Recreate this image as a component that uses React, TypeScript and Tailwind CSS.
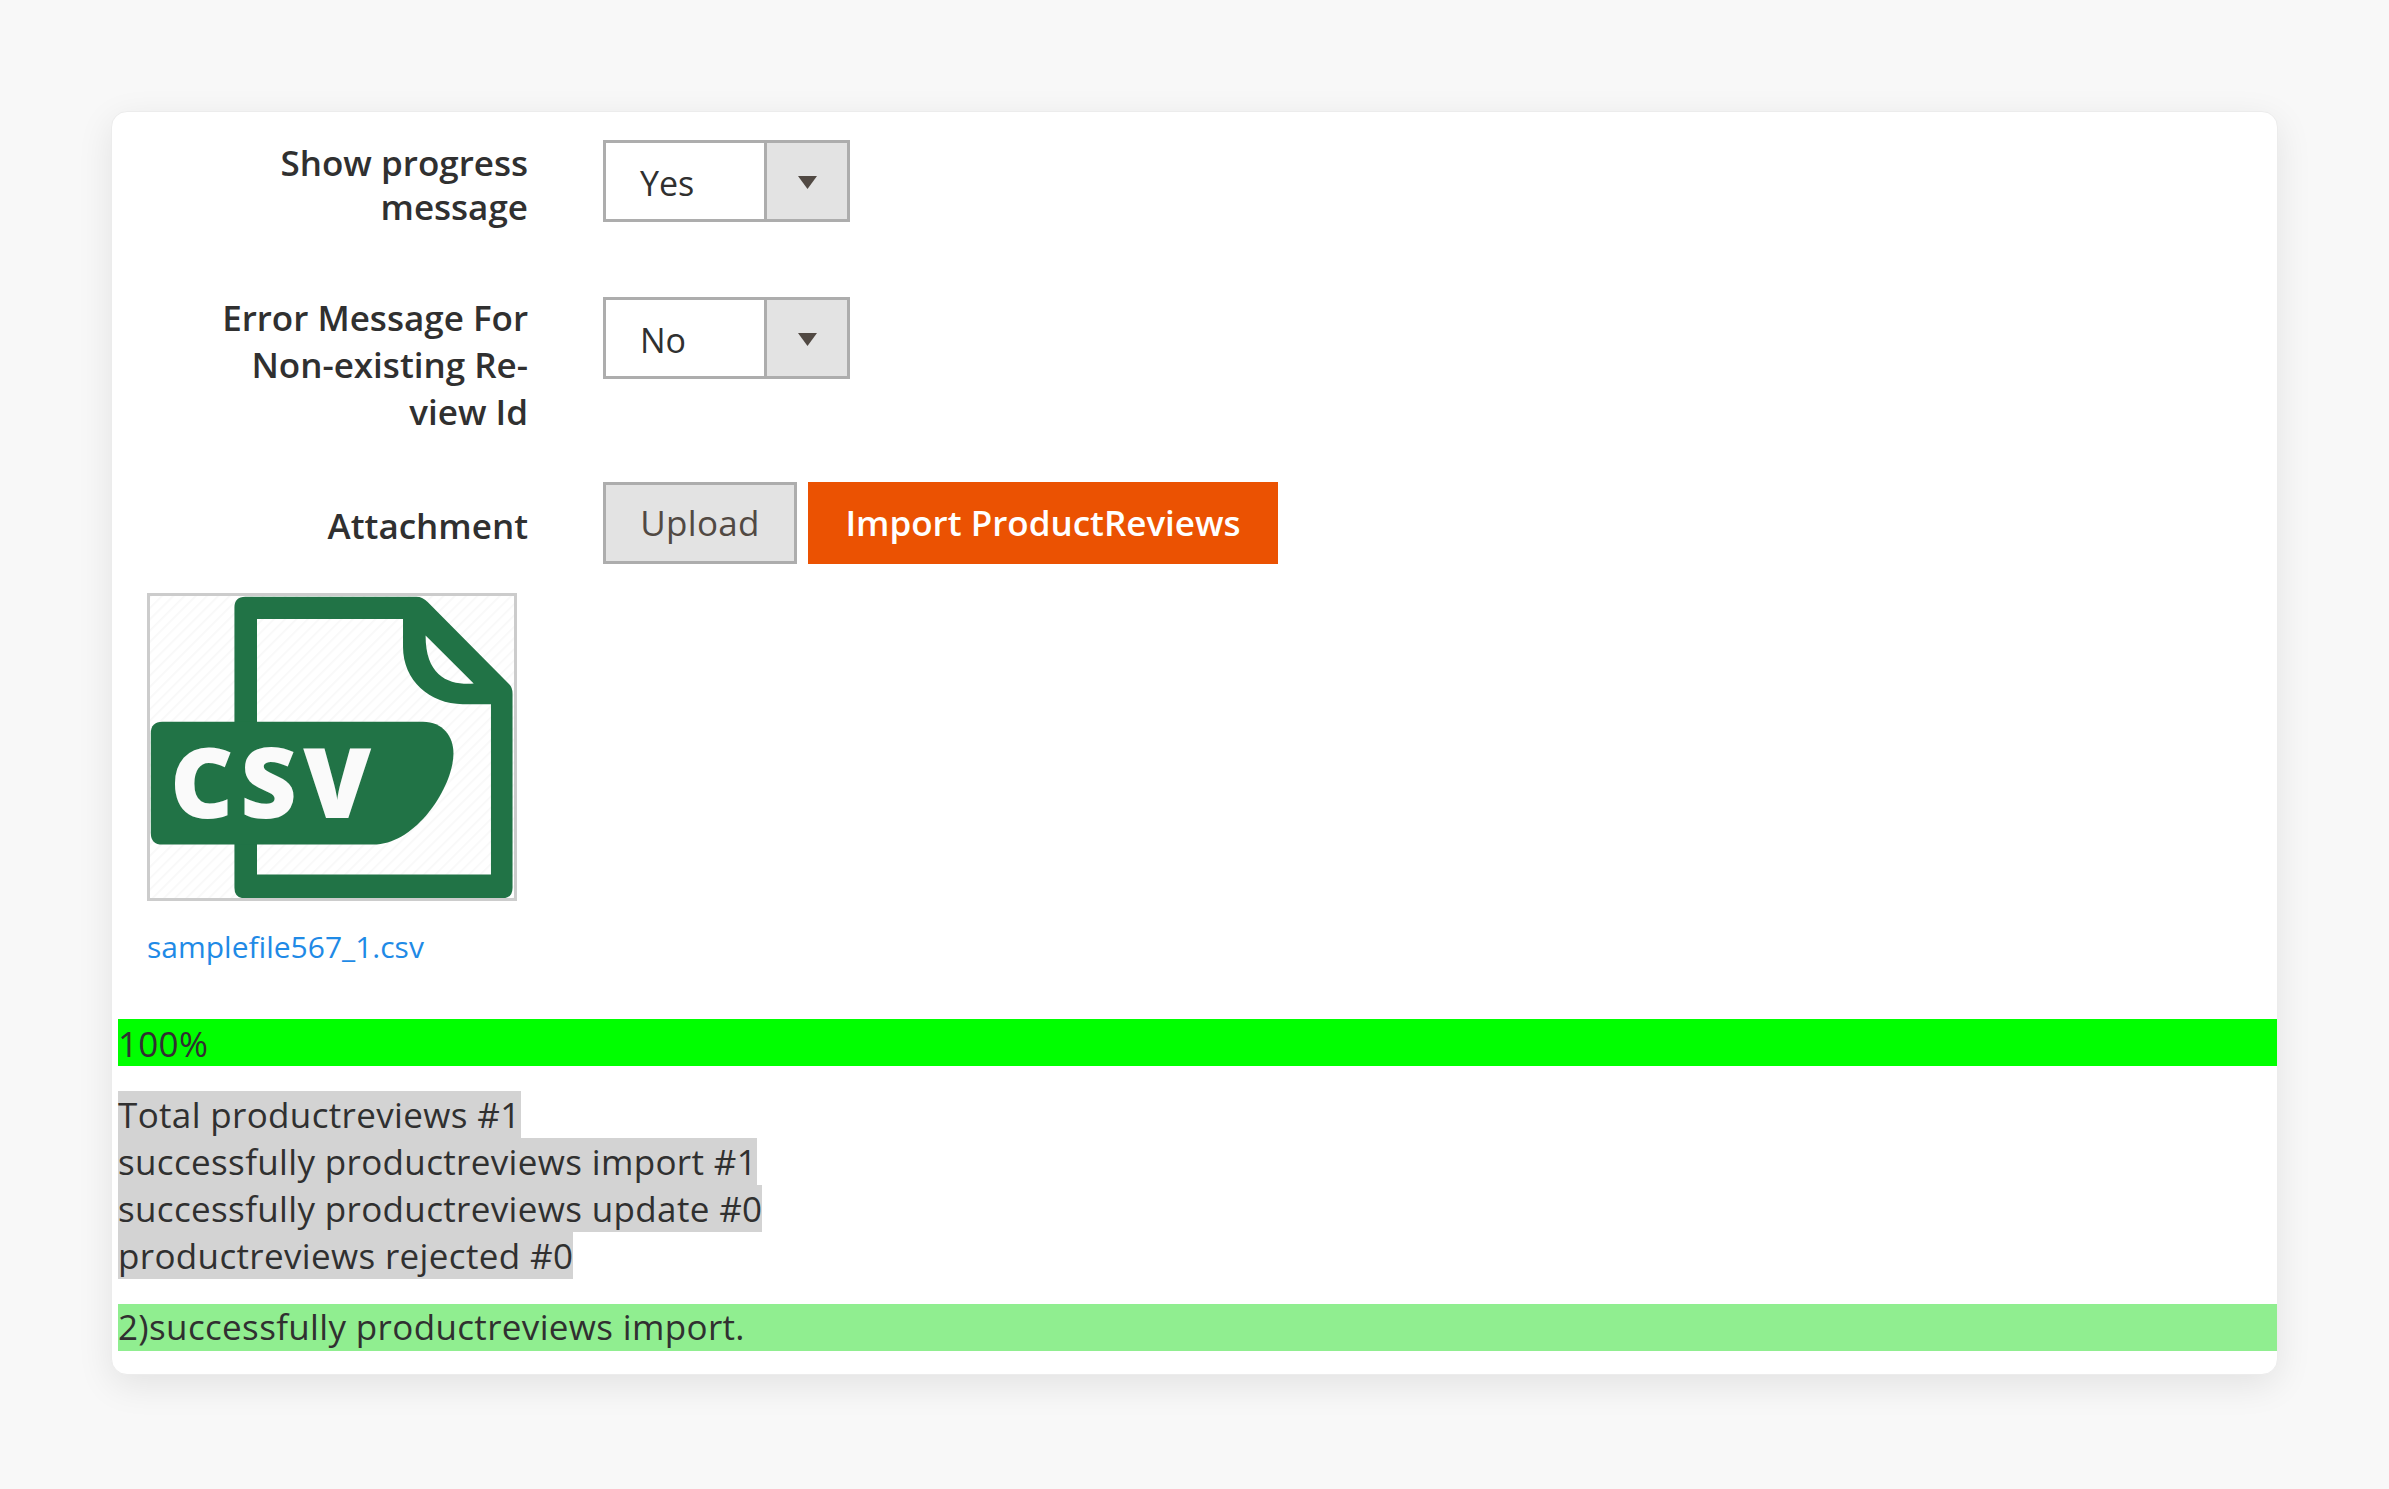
const labelClass =
  "w-[410px] shrink-0 text-right text-[35px] font-semibold text-[#303030]";

function SelectBox({ value }: { value: string }) {
  return (
    <div className="ml-[75px] flex h-[82px] w-[247px] shrink-0 border-[3px] border-[#adadad]">
      <div className="flex-1 bg-white pl-[34px] pt-[2px] text-[34px] leading-[76px] text-[#303030]">{value}</div>
      <div className="flex w-[83px] items-center justify-center border-l-[3px] border-[#adadad] bg-[#e3e3e3] pt-[3px]">
        <svg width="19" height="13" viewBox="0 0 19 13">
          <path d="M0 0h19l-9.5 13z" fill="#514943" />
        </svg>
      </div>
    </div>
  );
}

function CsvIcon() {
  return (
    <svg viewBox="58 46 1096 910" className="h-full w-full">
      <defs>
        <pattern id="hatch" width="24" height="24" patternUnits="userSpaceOnUse" patternTransform="rotate(45)">
          <rect width="24" height="24" fill="#ffffff" />
          <rect width="5" height="24" fill="#f8f8f8" />
        </pattern>
      </defs>
      <rect x="52" y="40" width="1108" height="922" fill="url(#hatch)" />
      <path
        fillRule="evenodd"
        fill="#217346"
        d="M345 48H860Q880 48 895 65L1140 312Q1150 322 1150 340V925Q1150 957 1118 957H345Q312 957 312 925V430H380V795H312V430V80Q312 48 345 48ZM380 115V430H312V795H380V885H1085V372H1000C900 372 820 300 820 200V115ZM888 165C888 290 960 315 1033 310Z"
      />
      <path
        fill="#217346"
        d="M95 425H880C940 425 972 470 972 520C972 620 860 795 730 795H95Q60 795 60 760V460Q60 425 95 425Z"
      />
      <text
        x="118"
        y="715"
        fill="#fafafa"
        fontFamily="'Open Sans', sans-serif"
        fontWeight="800"
        fontSize="295"
        textLength="606"
        lengthAdjust="spacing"
      >
        CSV
      </text>
    </svg>
  );
}

export default function App() {
  return (
    <div className="min-h-screen bg-[#f8f8f8] pl-[111px] pt-[111px] font-['Open_Sans',sans-serif]">
      <div className="w-[2167px] rounded-[16px] border-[1.5px] border-[#ececec] bg-white pb-[23px] pl-[6px] pt-[28px] shadow-[0_10px_36px_rgba(0,0,0,0.09)]">
        <div className="mb-[63px] flex h-[94px]">
          <div className={`${labelClass} mt-[1px] leading-[44px]`}>
            Show progress
            <br />
            message
          </div>
          <SelectBox value="Yes" />
        </div>

        <div className="mb-[46px] flex h-[139px]">
          <div className={`${labelClass} -mt-[3px] leading-[47px]`}>
            Error Message For
            <br />
            Non-existing Re-
            <br />
            view Id
          </div>
          <SelectBox value="No" />
        </div>

        <div className="mb-[30px] flex h-[81px]">
          <div className={`${labelClass} pt-[21px] leading-[46px]`}>Attachment</div>
          <button className="ml-[75px] h-[82px] w-[194px] border-[3px] border-[#adadad] bg-[#e3e3e3] text-[35px] font-medium tracking-[0.3px] text-[#514943]">
            Upload
          </button>
          <button className="ml-[11px] h-[82px] w-[470px] bg-[#eb5202] text-[35px] font-semibold text-white">
            Import ProductReviews
          </button>
        </div>

        <div className="ml-[29px] h-[308px] w-[370px] border-[3px] border-[#cccccc]">
          <CsvIcon />
        </div>
        <a className="ml-[29px] mt-[25px] block text-[30px] leading-[42px] text-[#1f8ae6]">samplefile567_1.csv</a>

        <div className="mt-[51px] h-[47px] bg-[#00ff00] text-[35px] leading-[49px] tracking-[0.3px] text-[#303030]">100%</div>

        <div className="mt-[25px] text-[35px] leading-[47px] tracking-[0.35px] text-[#303030]">
          <div className="w-fit bg-[#d3d3d3]">Total productreviews #1</div>
          <div className="w-fit bg-[#d3d3d3]">successfully productreviews import #1</div>
          <div className="w-fit bg-[#d3d3d3]">successfully productreviews update #0</div>
          <div className="w-fit bg-[#d3d3d3]">productreviews rejected #0</div>
        </div>

        <div className="mt-[25px] h-[47px] bg-[#90ee90] text-[35px] leading-[46px] tracking-[0.35px] text-[#303030]">
          2)successfully productreviews import.
        </div>
      </div>
    </div>
  );
}
